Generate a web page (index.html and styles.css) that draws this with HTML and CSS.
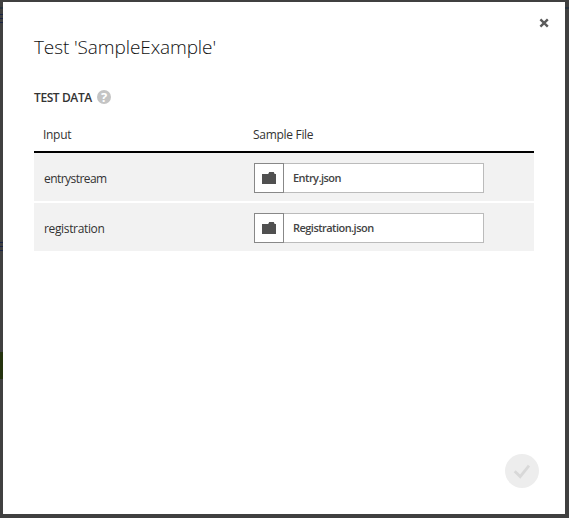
FILE: index.html
```html
<!DOCTYPE html>
<html lang="en">
<head>
<meta charset="utf-8">
<title>Test 'SampleExample'</title>
<link rel="stylesheet" href="styles.css">
</head>
<body>
<div class="backdrop">
  <i class="rule rule-top"></i>
  <i class="lines lines-a"></i>
  <i class="lines lines-b"></i>
  <i class="green"></i>
  <i class="rule rule-right"></i>
</div>
<main class="dialog">
  <button class="close" aria-label="Close">
    <svg width="10" height="10" viewBox="0 0 10 10"><path d="M1.4 1.4 8.8 8.6M8.8 1.4 1.4 8.6" stroke="#5a5a5a" stroke-width="2.4" fill="none"/></svg>
  </button>
  <h1 class="title">Test 'SampleExample'</h1>
  <div class="section">
    <h2 class="label">TEST DATA</h2>
    <span class="help">?</span>
  </div>
  <div class="table">
    <div class="row head"><span class="col-input">Input</span><span class="col-sample">Sample File</span></div>
    <div class="row item">
      <span class="col-input entry">entrystream</span>
      <div class="file">
        <button class="browse" aria-label="Browse"><svg width="14" height="12" viewBox="0 0 14 12"><path d="M0 2h6.2L7.2 0h4.6l.8 2H14v10H0z" fill="#505050"/></svg></button>
        <span class="name">Entry.json</span>
      </div>
    </div>
    <div class="row item">
      <span class="col-input">registration</span>
      <div class="file">
        <button class="browse" aria-label="Browse"><svg width="14" height="12" viewBox="0 0 14 12"><path d="M0 2h6.2L7.2 0h4.6l.8 2H14v10H0z" fill="#505050"/></svg></button>
        <span class="name">Registration.json</span>
      </div>
    </div>
  </div>
  <footer class="footer">
    <button class="confirm" aria-label="Complete">
      <svg width="34" height="34" viewBox="0 0 34 34"><path d="M9.7 17.2 15.2 22.6 24 11.6" stroke="#d8d8d8" stroke-width="2.8" fill="none"/></svg>
    </button>
  </footer>
</main>
</body>
</html>
```
FILE: styles.css
```css
* { box-sizing: border-box; }
body {
  margin: 0;
  width: 569px;
  height: 518px;
  padding: 2px 4px 4px 3px;
  overflow: hidden;
  background: #404040;
  color: #333;
  font: 12px/16px "Open Sans", "Noto Sans", sans-serif;
}
button { padding: 0; border: 0; background: none; display: flex; align-items: center; justify-content: center; }
svg { display: block; }
.backdrop i { position: absolute; }
.rule { background: #29343f; height: 2px; }
.rule-top { left: 0; top: 7px; width: 3px; }
.rule-right { left: 565px; top: 7px; width: 4px; }
.lines { left: 0; width: 3px; height: 9px; background: repeating-linear-gradient(#1a2546 0 1px, #404040 1px 4px); }
.lines-a { top: 14px; }
.lines-b { top: 242px; }
.green { left: 0; top: 352px; width: 3px; height: 27px; background: #25330f; }
.dialog {
  position: relative;
  width: 562px;
  height: 512px;
  padding: 32px 31px 26px;
  background: #fff;
  display: flex;
  flex-direction: column;
}
.close { position: absolute; left: 536px; top: 16px; width: 10px; height: 10px; }
.title { margin: 0; font-size: 19px; line-height: 26px; font-weight: 300; white-space: nowrap; letter-spacing: -0.1px; color: #111; }
.section { display: flex; align-items: center; gap: 5px; height: 16px; margin-top: 29px; }
.label { margin: 0; padding-top: 1px; font-size: 12px; line-height: 16px; font-weight: 600; width: 58px; white-space: nowrap; letter-spacing: -0.4px; }
.help {
  width: 14px; height: 14px; border-radius: 50%;
  background: #c4c4c4; color: #fff;
  font-size: 13px; line-height: 14px; font-weight: 700; text-align: center;
}
.table { width: 500px; margin-top: 20px; }
.row { display: flex; align-items: center; }
.head { height: 28px; padding: 0 0 6px 9px; border-bottom: 2px solid #000; letter-spacing: -0.3px; }
.item { height: 48px; padding: 2px 0 0 10px; background: #f2f2f2; letter-spacing: -0.35px; }
.item + .item { margin-top: 2px; }
.col-input { width: 210px; }
.item .col-input { padding-top: 2px; }
.item .entry { letter-spacing: -0.55px; }
.file { display: flex; width: 230px; height: 30px; background: #fff; }
.browse { width: 30px; height: 30px; border: 1px solid #888; }
.name {
  flex: 1; padding-left: 9px;
  border: 1px solid #bbb; border-left: 0;
  line-height: 28px; font-size: 11px; font-weight: 600; color: #444; letter-spacing: -0.53px;
}
.footer { margin-top: auto; display: flex; justify-content: flex-end; margin-right: -5px; }
.confirm { width: 34px; height: 34px; border-radius: 50%; background: #ededed; }
```
